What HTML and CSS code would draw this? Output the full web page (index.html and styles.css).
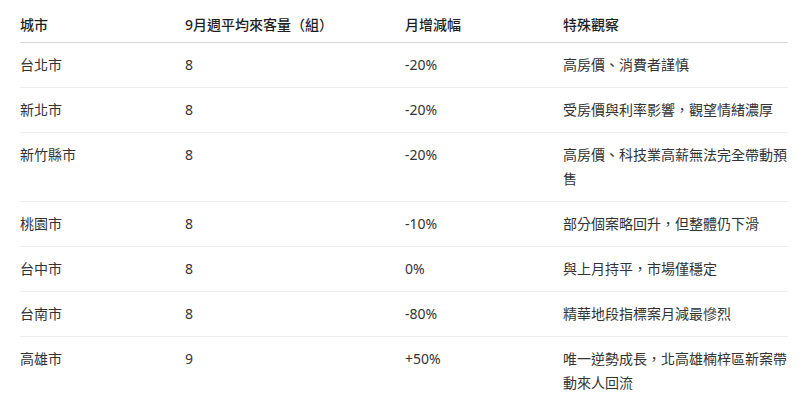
FILE: index.html
```html
<!DOCTYPE html>
<html lang="zh-Hant">
<head>
<meta charset="utf-8">
<link rel="stylesheet" href="styles.css">
</head>
<body>
<table class="data">
  <colgroup>
    <col class="c1"><col class="c2"><col class="c3"><col class="c4">
  </colgroup>
  <thead>
    <tr><th>城市</th><th>9月週平均來客量（組）</th><th>月增減幅</th><th>特殊觀察</th></tr>
  </thead>
  <tbody>
    <tr><td>台北市</td><td>8</td><td>-20%</td><td>高房價、消費者謹慎</td></tr>
    <tr><td>新北市</td><td>8</td><td>-20%</td><td>受房價與利率影響，觀望情緒濃厚</td></tr>
    <tr><td>新竹縣市</td><td>8</td><td>-20%</td><td>高房價、科技業高薪無法完全帶動預售</td></tr>
    <tr><td>桃園市</td><td>8</td><td>-10%</td><td>部分個案略回升，但整體仍下滑</td></tr>
    <tr><td>台中市</td><td>8</td><td>0%</td><td>與上月持平，市場僅穩定</td></tr>
    <tr><td>台南市</td><td>8</td><td>-80%</td><td>精華地段指標案月減最慘烈</td></tr>
    <tr><td>高雄市</td><td>9</td><td>+50%</td><td>唯一逆勢成長，北高雄楠梓區新案帶動來人回流</td></tr>
  </tbody>
</table>
</body>
</html>
```
FILE: styles.css
```css
html, body {
  margin: 0;
  padding: 0;
  background: #ffffff;
}
body {
  padding: 0 21px 0 20px;
  font-family: "Noto Sans", "Noto Sans CJK TC", sans-serif;
  font-size: 14px;
  color: #333333;
}
.data {
  width: 768px;
  border-collapse: collapse;
  table-layout: fixed;
}
.c1 { width: 165px; }
.c2 { width: 220px; }
.c3 { width: 158px; }
.c4 { width: 225px; }
.data th {
  text-align: left;
  font-weight: 500;
  color: #1f1f1f;
  line-height: 24px;
  padding: 13px 0 5px 0;
  border-bottom: 1px solid #d9d9d9;
}
.data td {
  vertical-align: top;
  line-height: 24px;
  padding: 10px 0 10px 0;
  border-bottom: 1px solid #ededed;
}
.data tbody tr:last-child td {
  border-bottom: none;
}
```
